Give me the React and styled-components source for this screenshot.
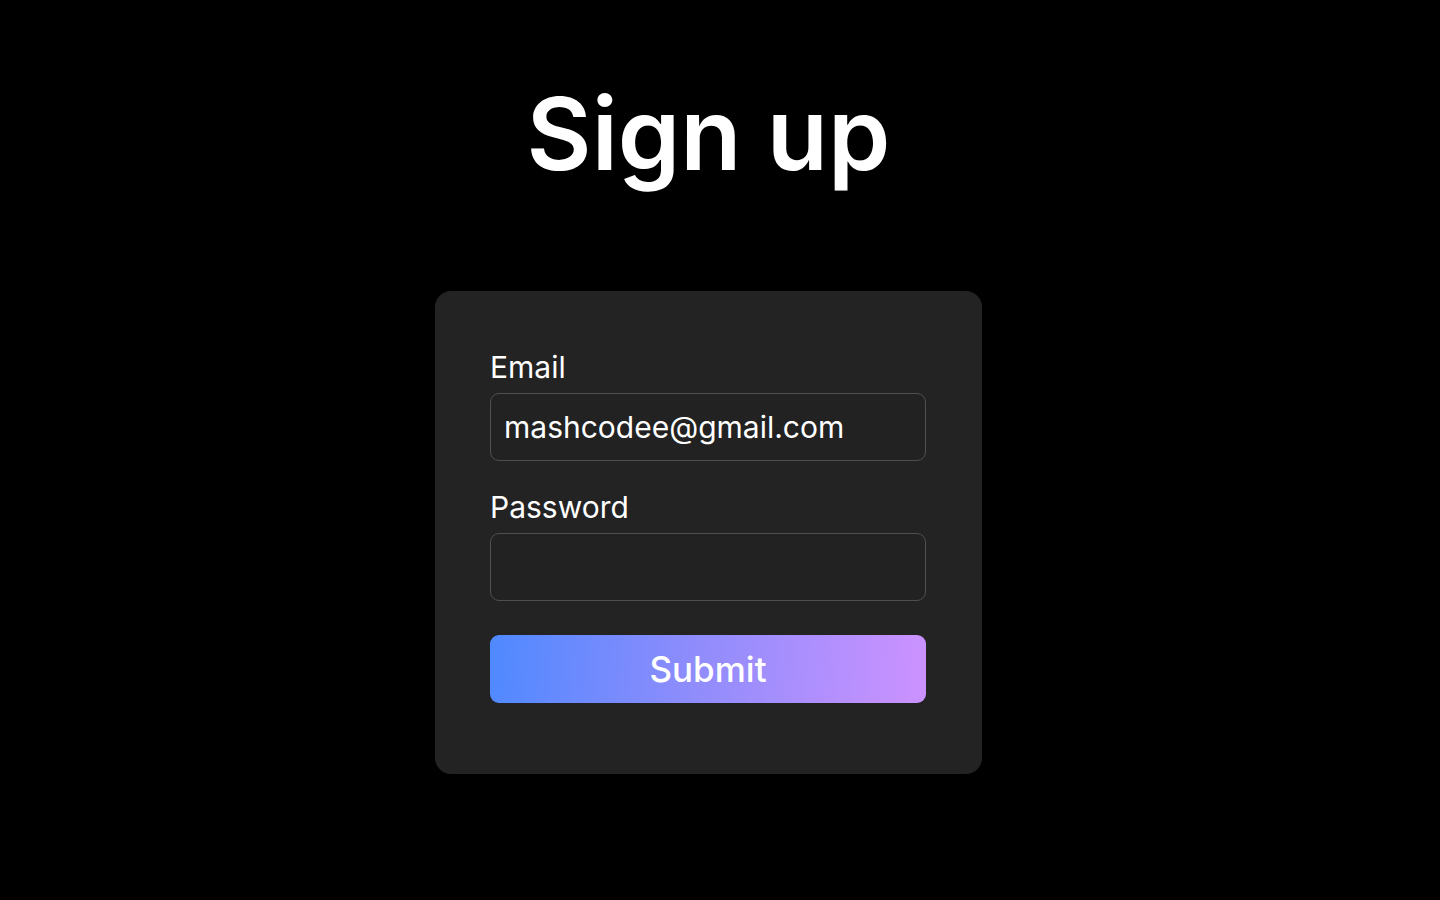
import React from 'react';
import styled, { createGlobalStyle } from 'styled-components';

const GlobalStyle = createGlobalStyle`
  html, body {
    margin: 0;
    padding: 0;
    background: #000;
    font-family: Inter, "Noto Sans", sans-serif;
    color: #fff;
  }
  * {
    box-sizing: border-box;
  }
`;

const Page = styled.main`
  min-height: 100vh;
  padding: 73px 23px 0 0;
  display: flex;
  flex-direction: column;
  align-items: center;
`;

const Title = styled.h1`
  margin: 0 0 97px;
  font-size: 100px;
  font-weight: 600;
  line-height: 121px;
  text-align: center;
`;

const Card = styled.form`
  width: 547px;
  padding: 59px 56px 71px 55px;
  background: #232323;
  border-radius: 16px;
  display: flex;
  flex-direction: column;
`;

const Field = styled.div`
  display: flex;
  flex-direction: column;
  gap: 9px;
  margin-bottom: ${(p) => p.$space}px;
`;

const Label = styled.label`
  font-size: 30px;
  line-height: 34px;
  font-weight: 400;
`;

const Input = styled.input`
  width: 100%;
  height: 68px;
  padding: 0 13px;
  background: #222;
  border: 1px solid #4f4f4f;
  border-radius: 9px;
  color: #fff;
  font-family: Inter, "Noto Sans", sans-serif;
  font-size: 30px;
  outline: none;
`;

const Button = styled.button`
  height: 68px;
  border: none;
  border-radius: 9px;
  background: linear-gradient(95deg, #4f89ff 0%, #8d8cfc 45%, #cc92ff 100%);
  color: #fff;
  font-family: Inter, "Noto Sans", sans-serif;
  font-size: 35px;
  font-weight: 500;
  cursor: pointer;
`;

export default function App() {
  return (
    <>
      <GlobalStyle />
      <Page>
        <Title>Sign up</Title>
        <Card onSubmit={(e) => e.preventDefault()}>
          <Field $space={29}>
            <Label htmlFor="email">Email</Label>
            <Input id="email" type="email" defaultValue="mashcodee@gmail.com" />
          </Field>
          <Field $space={34}>
            <Label htmlFor="password">Password</Label>
            <Input id="password" type="password" />
          </Field>
          <Button type="submit">Submit</Button>
        </Card>
      </Page>
    </>
  );
}
